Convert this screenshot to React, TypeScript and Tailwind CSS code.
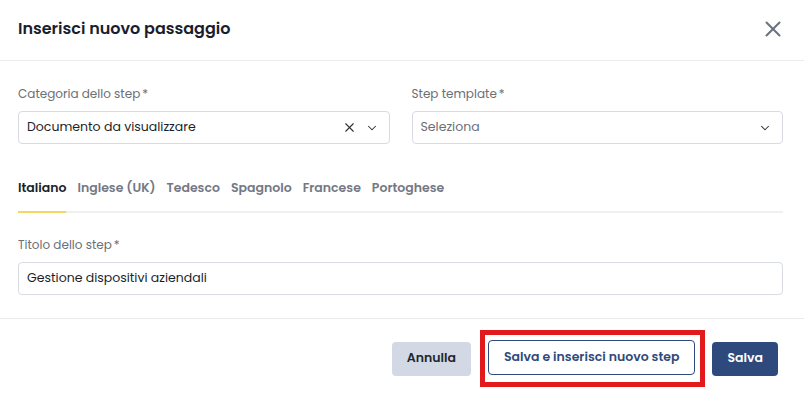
import { X, ChevronDown } from 'lucide-react'

const tabs = ['Italiano', 'Inglese (UK)', 'Tedesco', 'Spagnolo', 'Francese', 'Portoghese']

function Label({ children }: { children: string }) {
  return (
    <div className="mb-[8px] text-[12px] leading-[18px] text-[#6b6f76]">
      {children}
      <span className="ml-[2px]">*</span>
    </div>
  )
}

export default function App() {
  return (
    <div className="h-[394px] w-[804px] bg-white text-[#1b1f2a]" style={{ fontFamily: '"Poppins", "Open Sans", sans-serif' }}>
      {/* intestazione */}
      <div className="flex h-[61px] items-center justify-between border-b border-[#ececec] pb-[3px] pl-[18px] pr-[18px]">
        <h2 className="text-[16px] font-semibold text-[#1a1e2c]">Inserisci nuovo passaggio</h2>
        <X className="h-[26px] w-[26px] text-[#6b7280]" strokeWidth={1.9} />
      </div>

      <div className="border-b border-[#ececec] pb-[23px] pl-[18px] pr-[21px] pt-[24px]">
        <div className="grid grid-cols-2 gap-[22px]">
          <div>
            <Label>Categoria dello step</Label>
            <div className="flex h-[33px] items-center rounded-[4px] border border-[#d8dbe2] pl-[8px] pr-[10px]">
              <span className="flex-1 text-[12.5px] text-[#1b1f2a]">Documento da visualizzare</span>
              <X className="mr-[8px] h-[15px] w-[15px] text-[#2b2f38]" strokeWidth={1.7} />
              <ChevronDown className="h-[14px] w-[14px] text-[#2b2f38]" strokeWidth={1.8} />
            </div>
          </div>
          <div>
            <Label>Step template</Label>
            <div className="flex h-[33px] items-center rounded-[4px] border border-[#d8dbe2] pl-[8px] pr-[10px]">
              <span className="flex-1 text-[12.5px] text-[#6b6f76]">Seleziona</span>
              <ChevronDown className="h-[14px] w-[14px] text-[#2b2f38]" strokeWidth={1.8} />
            </div>
          </div>
        </div>

        {/* lingue */}
        <div className="mt-[34px] flex border-b-[2px] border-[#f0f0f0]">
          {tabs.map((t, i) => (
            <div
              key={t}
              className={
                i === 0
                  ? '-mb-[2px] mr-[11px] border-b-[2px] border-[#f5d75e] pb-[14px] text-[12.5px] font-semibold leading-[19px] text-[#1a1e2c]'
                  : 'mr-[11px] pb-[14px] text-[12.5px] font-semibold leading-[19px] text-[#747884]'
              }
            >
              {t}
            </div>
          ))}
        </div>

        <div className="mt-[23px]">
          <Label>Titolo dello step</Label>
          <div className="flex h-[33px] items-center rounded-[4px] border border-[#d8dbe2] pl-[8px]">
            <span className="text-[12.5px] text-[#1b1f2a]">Gestione dispositivi aziendali</span>
          </div>
        </div>
      </div>

      {/* azioni */}
      <div className="flex items-center justify-end pr-[26px] pt-[11px]">
        <button className="h-[34px] rounded-[4px] bg-[#d3d9e4] px-[15px] text-[12.5px] font-semibold text-[#22262f]">Annulla</button>
        <div className="ml-[9px] border-[5px] border-[#e31a1c] pb-[7px] pl-[3px] pr-[5px] pt-[5px]">
          <button className="h-[35px] rounded-[4px] border border-[#2f4a7c] bg-white px-[15px] text-[12.5px] font-semibold text-[#2f4a7c]">
            Salva e inserisci nuovo step
          </button>
        </div>
        <button className="ml-[7px] h-[34px] rounded-[4px] bg-[#2e4a7d] px-[15px] text-[12.5px] font-semibold text-white">Salva</button>
      </div>
    </div>
  )
}
